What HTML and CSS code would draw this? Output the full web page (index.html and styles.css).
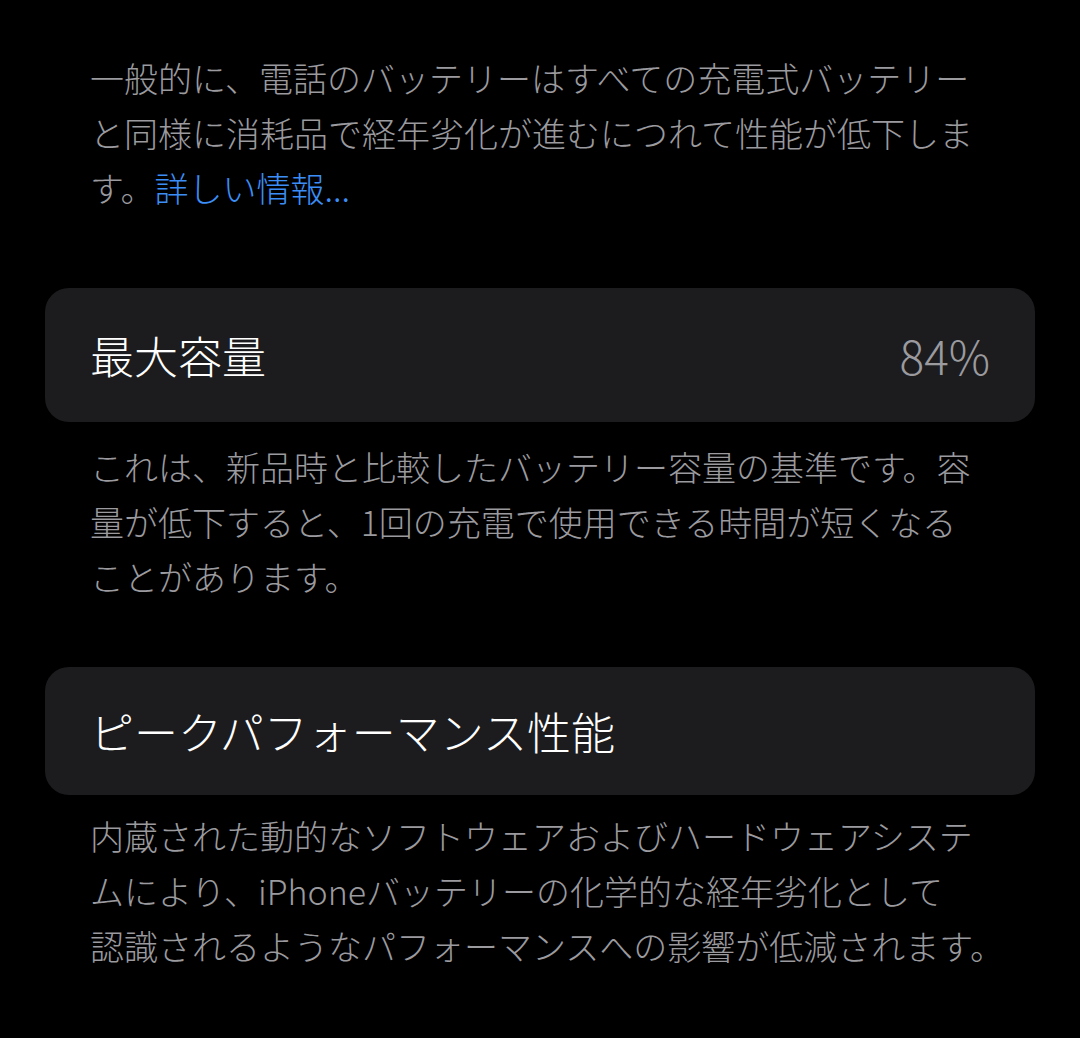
FILE: index.html
```html
<!DOCTYPE html>
<html lang="ja">
<head>
    <meta charset="UTF-8">
    <meta name="viewport" content="width=device-width, initial-scale=1.0">
    <title>バッテリーの状態</title>
    <link rel="stylesheet" href="styles.css">
</head>
<body>
    <div class="battery-page">
        <p class="note note-intro">
            一般的に、電話のバッテリーはすべての充電式バッテリー<br>と同様に消耗品で経年劣化が進むにつれて性能が低下しま<br>す。<a href="#" class="more-link">詳しい情報...</a>
        </p>

        <div class="row-card capacity">
            <span class="row-title">最大容量</span>
            <span class="row-value">84%</span>
        </div>
        <p class="note">
            これは、新品時と比較したバッテリー容量の基準です。容<br>量が低下すると、1回の充電で使用できる時間が短くなる<br>ことがあります。
        </p>

        <div class="row-card peak">
            <span class="row-title">ピークパフォーマンス性能</span>
        </div>
        <p class="note">
            内蔵された動的なソフトウェアおよびハードウェアシステ<br>ムにより、iPhoneバッテリーの化学的な経年劣化として<br>認識されるようなパフォーマンスへの影響が低減されます。
        </p>
    </div>
</body>
</html>
```

FILE: styles.css
```css
body {
    margin: 0;
    padding: 0;
    background-color: #000;
    font-family: "Noto Sans CJK JP", "Noto Sans", sans-serif;
}
.battery-page {
    padding: 50px 45px 0;
    display: flex;
    flex-direction: column;
}
.note {
    margin: 0;
    padding: 0 45px;
    font-size: 34px;
    font-weight: 300;
    line-height: 55px;
    color: #9a9a9f;
    white-space: nowrap;
}
.note-intro {
    margin-bottom: 73px;
}
.more-link {
    color: #3b8ef5;
    text-decoration: none;
}
.row-card {
    display: flex;
    justify-content: space-between;
    align-items: center;
    background-color: #1c1c1e;
    border-radius: 24px;
    padding: 0 45px;
}
.capacity {
    height: 134px;
    margin-bottom: 17px;
}
.peak {
    height: 128px;
    margin-top: 63px;
    margin-bottom: 13px;
}
.row-title {
    font-size: 44px;
    font-weight: 300;
    color: #fff;
}
.row-value {
    font-size: 46px;
    font-weight: 300;
    color: #9a9a9f;
}
```
